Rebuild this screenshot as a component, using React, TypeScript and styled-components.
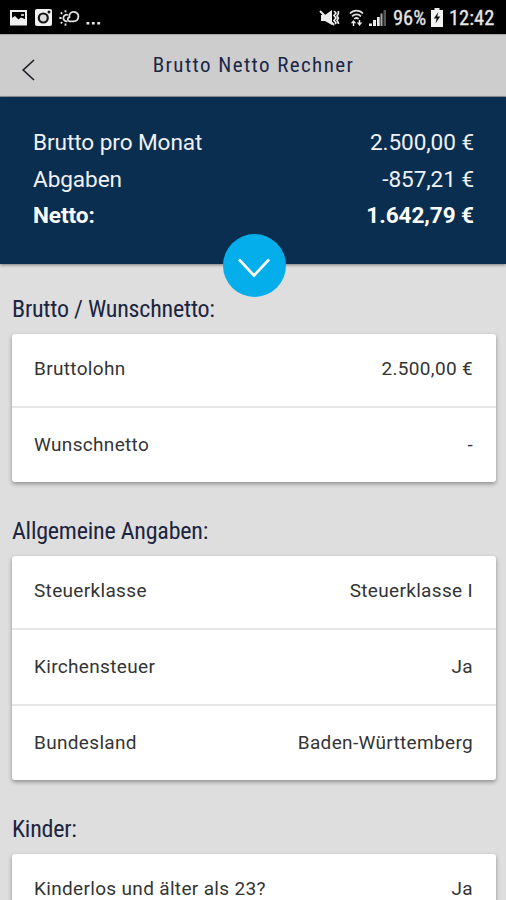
import React from "react";
import styled, { createGlobalStyle } from "styled-components";

const GlobalStyle = createGlobalStyle`
  *, *::before, *::after { box-sizing: border-box; }
  html, body { margin: 0; padding: 0; height: 100%; overflow: hidden; background: #dedede; }
  body { font-family: Roboto, "Liberation Sans", sans-serif; }
`;

const Screen = styled.div`
  width: 506px;
  height: 900px;
  overflow: hidden;
  display: flex;
  flex-direction: column;
  background: #dedede;
`;

const StatusBar = styled.header`
  flex: none;
  height: 34px;
  padding: 1px 10px 0 9px;
  display: flex;
  align-items: center;
  justify-content: space-between;
  background: #000;
  color: #e6e6e6;
`;

const StatusGroup = styled.div`
  display: flex;
  align-items: center;
`;

const StatusIcon = styled.svg<{ $gap: number }>`
  display: block;
  flex: none;
  margin-right: ${(p) => p.$gap}px;
`;

const StatusText = styled.span<{ $width: number }>`
  width: ${(p) => p.$width}px;
  padding-top: 1px;
  font-size: 20.5px;
  font-stretch: 86%;
  line-height: 33px;
  white-space: nowrap;
  -webkit-text-stroke: 0.3px currentColor;
`;

const TitleBar = styled.div`
  flex: none;
  height: 63px;
  display: grid;
  grid-template-columns: 60px 1fr 60px;
  align-items: center;
  background: #cdcdcd;
  border-top: 1px solid #a5a2a4;
  border-bottom: 1px solid #8f9499;
`;

const BackButton = styled.button`
  width: 60px;
  height: 60px;
  padding: 8px 0 0 20px;
  border: 0;
  display: flex;
  align-items: center;
  justify-content: flex-start;
  background: none;
  color: #1d2027;
`;

const Title = styled.h1`
  margin: 0;
  padding-left: 1px;
  text-align: center;
  font-size: 21px;
  font-weight: 400;
  font-stretch: 75%;
  letter-spacing: 1.42px;
  line-height: 58px;
  padding-bottom: 2px;
  color: #1c2748;
`;

const Summary = styled.section`
  position: relative;
  flex: none;
  height: 167px;
  padding: 27px 32px 0 33px;
  background: #0a2e50;
  color: #f0f1f4;
  box-shadow: 0 1px 3px rgba(0, 0, 0, 0.45);
`;

const SummaryRow = styled.div<{ $strong?: boolean }>`
  height: 36.5px;
  display: flex;
  justify-content: space-between;
  font-size: 22.6px;
  letter-spacing: -0.08px;
  line-height: 37px;
  font-weight: ${(p) => (p.$strong ? 700 : 400)};
  color: ${(p) => (p.$strong ? "#ffffff" : "#f0f1f4")};
`;

const ExpandButton = styled.button`
  position: absolute;
  left: 222.5px;
  bottom: -33px;
  width: 63.5px;
  height: 63.5px;
  padding: 5px 0 0;
  border: 0;
  border-radius: 50%;
  display: flex;
  align-items: center;
  justify-content: center;
  background: #03aeeb;
  color: #fff;
`;

const Section = styled.section`
  flex: none;
  padding: 0 10px 0 12px;
  margin-bottom: 31px;
  &:first-child { margin-top: 27px; }
`;

const SectionTitle = styled.h2`
  margin: 0;
  height: 43px;
  font-size: 24px;
  font-weight: 400;
  font-stretch: 75%;
  letter-spacing: -0.22px;
  line-height: 37px;
  white-space: nowrap;
  color: #1b2440;
`;

const Card = styled.div`
  background: #fff;
  border-radius: 3px;
  box-shadow: 0 2px 4px rgba(0, 0, 0, 0.36);
`;

const Row = styled.div`
  height: 76px;
  padding: 0 23px 2px 22px;
  display: flex;
  align-items: center;
  justify-content: space-between;
  font-size: 19px;
  letter-spacing: 0.33px;
  white-space: nowrap;
  color: #343434;
  &:first-child { height: 72px; padding-bottom: 4px; }
  & + & { border-top: 2px solid #e6e6e6; }
`;

const totals = [
  { label: "Brutto pro Monat", value: "2.500,00 €" },
  { label: "Abgaben", value: "-857,21 €" },
  { label: "Netto:", value: "1.642,79 €", strong: true },
];

const sections = [
  { title: "Brutto / Wunschnetto:", rows: [["Bruttolohn", "2.500,00 €"], ["Wunschnetto", "-"]] },
  {
    title: "Allgemeine Angaben:",
    rows: [["Steuerklasse", "Steuerklasse I"], ["Kirchensteuer", "Ja"], ["Bundesland", "Baden-Württemberg"]],
  },
  { title: "Kinder:", rows: [["Kinderlos und älter als 23?", "Ja"]] },
];

const PictureIcon = () => (
  <StatusIcon $gap={6} width="19" height="18" viewBox="0 0 19 18" fill="none">
    <rect x="2" y="2" width="15" height="13.5" stroke="#f0f0f0" strokeWidth="2" />
    <path d="M2 9.5 6 7l3.5 3.5 2.5-2 5 2V16H2z" fill="#f0f0f0" />
    <path d="M12 5h3v2h-3z" fill="#bbb" />
  </StatusIcon>
);

const CameraIcon = () => (
  <StatusIcon $gap={6} width="19" height="19" viewBox="0 0 19 19" fill="none">
    <rect x="1" y="1" width="17" height="17" rx="2" fill="#f2f2f2" />
    <circle cx="9.3" cy="10" r="5.6" fill="#151515" />
    <circle cx="9.3" cy="10" r="3.4" fill="#ddd" />
    <circle cx="15" cy="4" r="1.5" fill="#151515" />
  </StatusIcon>
);

const WeatherIcon = () => (
  <StatusIcon $gap={6} width="21" height="18" viewBox="0 0 21 18" fill="none" stroke="#e2e2e2" strokeWidth="1.8">
    <path d="M8.5 12.2A3.3 3.3 0 1 1 9 6M6.5 3.2V1.2M3.2 4.8 1.8 3.4M2.6 9H.3M3.2 13l-1.4 1.5M6.5 14.5v2.2" />
    <path d="M10.5 12.3C8.4 11.8 8 8.8 10.4 8.2 9.8 5 12 2.6 14.8 2.8c3 .2 4.8 2.4 4.6 5-.2 2.7-2.1 4.5-4.8 4.5z" />
  </StatusIcon>
);

const MuteIcon = () => (
  <StatusIcon $gap={8} width="22" height="20" viewBox="0 0 22 20" fill="none" stroke="#eee">
    <path d="M2 7h4l7-5v15l-7-4H2z" fill="#eee" stroke="none" />
    <path d="m1 3 14 14" strokeWidth="2" />
    <path d="m15 3 2 2-2 2.5 2 2.5-2 2.5 2 2.5-1 1M19.4 3v2.5L18 8l1.4 2-1.4 2.5 1.4 2.5v1" strokeWidth="1.6" />
  </StatusIcon>
);

const WifiIcon = () => (
  <StatusIcon $gap={4} width="15" height="20" viewBox="0 0 15 20" fill="none" stroke="#ddd" strokeWidth="1.7">
    <path d="M1 5.5C4.5 1.7 10.5 1.7 14 5.5M3 8.3c2.5-2.5 6.5-2.5 9 0M5.3 11c1.3-1.2 3.1-1.2 4.4 0" />
    <path d="M1.8 15.2 4.5 12l2.7 3.2zM7.8 14.5h5.4l-2.7 3.5zM3.8 14.5h1.4V18H3.8zM9.8 12h1.4v3H9.8z" fill="#eee" stroke="none" />
  </StatusIcon>
);

const SignalIcon = () => (
  <StatusIcon $gap={7} width="18" height="18" viewBox="0 0 18 18">
    <path d="M1 14.5h3V17H1zM5 11h3v6H5zM9 8h2.7v9H9z" fill="#eee" />
    <path d="M12.5 4.5h2V17h-2z" fill="#aaa" />
    <path d="M15.5 1H18v16h-2.5z" fill="#555" />
  </StatusIcon>
);

const BatteryIcon = () => (
  <StatusIcon $gap={6} width="12" height="19" viewBox="0 0 12 19">
    <path d="M3.5 0h5v2H12v17H0V2h3.5z" fill="#f2f2f2" />
    <path d="M7.3 4 2.8 10.5h2.8L4.5 15.5l4.7-7H6.3z" fill="#111" />
  </StatusIcon>
);

const DotsIcon = () => (
  <StatusIcon $gap={0} width="16" height="18" viewBox="0 0 16 18" fill="#e8e8e8">
    <path d="M.5 13h2.8v2.6H.5zM5.9 13h2.8v2.6H5.9zM11.3 13h2.8v2.6h-2.8z" />
  </StatusIcon>
);

export default function App() {
  return (
    <>
      <GlobalStyle />
      <Screen>
        <StatusBar>
          <StatusGroup>
            <PictureIcon />
            <CameraIcon />
            <WeatherIcon />
            <DotsIcon />
          </StatusGroup>
          <StatusGroup>
            <MuteIcon />
            <WifiIcon />
            <SignalIcon />
            <StatusText $width={38}>96%</StatusText>
            <BatteryIcon />
            <StatusText $width={47}>12:42</StatusText>
          </StatusGroup>
        </StatusBar>
        <TitleBar>
          <BackButton aria-label="Zurück">
            <svg width="17" height="22" viewBox="0 0 17 22" fill="none" stroke="currentColor" strokeWidth="1.7">
              <path d="M14 1 3.2 11 14 21" />
            </svg>
          </BackButton>
          <Title>Brutto Netto Rechner</Title>
        </TitleBar>
        <Summary>
          {totals.map((t) => (
            <SummaryRow key={t.label} $strong={t.strong}>
              <span>{t.label}</span>
              <span>{t.value}</span>
            </SummaryRow>
          ))}
          <ExpandButton aria-label="Details anzeigen">
            <svg width="32" height="20" viewBox="0 0 32 20" fill="none" stroke="currentColor" strokeWidth="2.6">
              <path d="m1 1.5 15 16 15-16" />
            </svg>
          </ExpandButton>
        </Summary>
        <main>
          {sections.map((s) => (
            <Section key={s.title}>
              <SectionTitle>{s.title}</SectionTitle>
              <Card>
                {s.rows.map(([label, value]) => (
                  <Row key={label}>
                    <span>{label}</span>
                    <span>{value}</span>
                  </Row>
                ))}
              </Card>
            </Section>
          ))}
        </main>
      </Screen>
    </>
  );
}
